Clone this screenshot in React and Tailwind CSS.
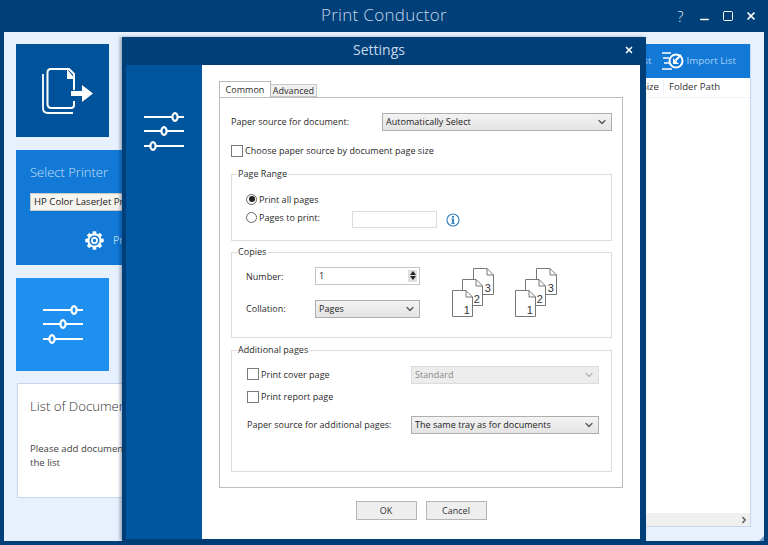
import { ChevronDown, X, Minus, Square, ChevronRight } from "lucide-react";

const sans = "font-['Open_Sans','Noto_Sans',sans-serif]";

function Sliders({ knob }) {
  const rows = [
    { y: 6, x: 31 },
    { y: 20, x: 20 },
    { y: 35, x: 9 },
  ];
  return (
    <svg width="40" height="41" viewBox="0 0 40 41" fill="none">
      {rows.map((r) => (
        <g key={r.y}>
          <line x1="0.5" x2="39.5" y1={r.y} y2={r.y} stroke="white" strokeWidth="2.2" strokeLinecap="round" />
          <ellipse cx={r.x} cy={r.y} rx="2.6" ry="3.8" fill={knob} stroke="white" strokeWidth="2.2" />
        </g>
      ))}
    </svg>
  );
}

function ExportIcon() {
  return (
    <svg width="51" height="46" viewBox="0 0 51 46" fill="none">
      <path d="M1 6 V40 Q1 45 6 45 H31" stroke="white" strokeWidth="1.8" />
      <path d="M32 22 V6 L27 1 H9 Q5.5 1 5.5 4.5 V36 Q5.5 40 9.5 40 H29 Q32 40 32 37 V33" stroke="white" strokeWidth="2" />
      <path d="M25 1 V11 H33 Z" fill="white" />
      <path d="M29 23 H40 V17 L51 25.5 L40 34 V28 H29 Z" fill="white" />
    </svg>
  );
}

function ImportIcon() {
  return (
    <svg width="22" height="19" viewBox="0 0 22 19" fill="none">
      <path d="M0 1 H9 M1 6 H7 M2 11 H7 M0 17 H10" stroke="white" strokeWidth="1.6" />
      <circle cx="14" cy="9" r="6.5" stroke="white" strokeWidth="2" />
      <path d="M19 3 L13.5 8.5" stroke="white" strokeWidth="2" />
      <path d="M11 6 L11 12 L17 12 Z" fill="white" />
    </svg>
  );
}

function GearIcon() {
  const teeth = [0, 45, 90, 135, 180, 225, 270, 315];
  return (
    <svg width="19" height="19" viewBox="0 0 19 19" fill="none">
      {teeth.map((a) => (
        <rect key={a} x="7.7" y="0.3" width="3.6" height="4" fill="white" transform={`rotate(${a} 9.5 9.5)`} />
      ))}
      <circle cx="9.5" cy="9.5" r="6.2" stroke="white" strokeWidth="2" />
      <circle cx="9.5" cy="9.5" r="2.6" stroke="white" strokeWidth="1.8" />
    </svg>
  );
}

function InfoIcon() {
  return (
    <svg width="14" height="14" viewBox="0 0 14 14" fill="none">
      <circle cx="7" cy="7" r="6" stroke="#3d86c6" strokeWidth="1.2" />
      <rect x="6" y="6" width="2" height="4.5" fill="#3d86c6" />
      <rect x="6" y="3" width="2" height="1.8" fill="#3d86c6" />
      <path d="M5 6 H8 M5 10.5 H9" stroke="#3d86c6" strokeWidth="0.8" />
    </svg>
  );
}

function Page({ n, className }) {
  return (
    <div className={`absolute w-[21px] h-[27px] ${className}`}>
      <svg width="21" height="27" viewBox="0 0 21 27" fill="none">
        <path d="M0.5 0.5 H14 L20.5 7 V26.5 H0.5 Z" fill="white" stroke="#777" />
        <path d="M14 0.5 V7 H20.5" stroke="#777" />
      </svg>
      <span className="absolute right-[3px] bottom-[0px] text-[11px] leading-[14px] text-[#333] font-['Liberation_Sans',sans-serif]">{n}</span>
    </div>
  );
}

function PageStack() {
  return (
    <div className="relative w-[44px] h-[50px]">
      <Page n="3" className="left-[21px] top-0" />
      <Page n="2" className="left-[10px] top-[11px]" />
      <Page n="1" className="left-0 top-[22px]" />
    </div>
  );
}

function Dropdown({ label, className, disabled }) {
  return (
    <div
      className={`flex items-center justify-between pl-[3px] pr-[3px] h-[18px] border text-[9px] ${
        disabled
          ? "border-[#dcdcdc] bg-[#ececec] text-[#8a8a8a]"
          : "border-[#aeaeae] bg-gradient-to-b from-[#f3f3f3] to-[#e4e4e4] text-[#222] font-medium"
      } ${className}`}
    >
      <span>{label}</span>
      <ChevronDown size={12} strokeWidth={2.6} className={disabled ? "text-[#b5b5b5]" : "text-[#555]"} />
    </div>
  );
}

function Checkbox({ label }) {
  return (
    <div className="flex items-center gap-[2px]">
      <div className="w-[12px] h-[12px] border border-[#7a7a7a] bg-white" />
      <span>{label}</span>
    </div>
  );
}

function Radio({ label, checked }) {
  return (
    <div className="flex items-center gap-[2px]">
      <div className="w-[11px] h-[11px] rounded-full border border-[#666] bg-white flex items-center justify-center">
        {checked && <div className="w-[6px] h-[6px] rounded-full bg-[#222]" />}
      </div>
      <span>{label}</span>
    </div>
  );
}

function Group({ title, className, children }) {
  return (
    <div className={`relative border border-[#dddddd] ${className}`}>
      <span className="absolute -top-[7px] left-[5px] bg-white px-[1px] leading-[12px]">{title}</span>
      {children}
    </div>
  );
}

function SettingsDialog() {
  return (
    <div className="absolute left-[122px] top-[37px] w-[524px] h-[504px] bg-[#003f78] flex flex-col shadow-[-2px_0_3px_rgba(0,30,70,0.35)]">
      <div className="relative h-[28px] shrink-0 flex items-center justify-center pr-[10px] pb-[3px] text-[14px] text-[#c6d8ea]">
        Settings
        <X size={10} strokeWidth={4} className="absolute right-[12px] top-[8px] text-white" />
      </div>
      <div className="flex flex-1 ml-[4px] mr-[6px] mb-[2px] min-h-0">
        <div className="w-[76px] bg-[#00559f] flex justify-center pt-[46px] pr-[1px]">
          <Sliders knob="#00559f" />
        </div>
        <div className="flex-1 bg-white pl-[17px] pr-[17px] pt-[17px] text-[9px] tracking-[0.03px] text-[#2a2a2a] flex flex-col">
          <div className="flex items-end h-[15px] relative z-10">
            <div className="h-[16px] w-[52px] border border-b-0 border-[#b8b8b8] bg-white flex items-center justify-center">Common</div>
            <div className="h-[13px] w-[46px] border border-l-0 border-[#c8c8c8] bg-[#f0f0f0] flex items-center justify-center">Advanced</div>
          </div>
          <div className="h-[391px] border border-[#bdbdbd] pl-[11px] pr-[10px] flex flex-col">
            <div className="flex items-center justify-between pt-[15px]">
              <span>Paper source for document:</span>
              <Dropdown label="Automatically Select" className="w-[230px]" />
            </div>
            <div className="mt-[13px]">
              <Checkbox label="Choose paper source by document page size" />
            </div>
            <Group title="Page Range" className="mt-[16px] h-[67px] pl-[14px] pt-[18px] flex flex-col gap-[4px]">
              <Radio label="Print all pages" checked />
              <div className="flex items-start">
                <div className="w-[106px] pt-[1px]">
                  <Radio label="Pages to print:" />
                </div>
                <div className="pt-[1px] flex items-center">
                  <div className="w-[85px] h-[17px] border border-[#dcdcdc]" />
                  <div className="ml-[9px]">
                    <InfoIcon />
                  </div>
                </div>
              </div>
            </Group>
            <Group title="Copies" className="mt-[11px] h-[86px] pl-[14px] pt-[14px] flex">
              <div className="w-[69px] flex flex-col gap-[19px] pt-[3px]">
                <span>Number:</span>
                <span>Collation:</span>
              </div>
              <div className="w-[105px] flex flex-col gap-[15px]">
                <div className="h-[18px] border border-[#c4c4c4] pl-[3px] pr-[2px] flex items-center justify-between text-[#222]">
                  <span>1</span>
                  <div className="w-[9px] h-[12px] bg-[#dedede] flex flex-col items-center justify-center gap-[1px]">
                    <div className="w-0 h-0 border-x-[3px] border-x-transparent border-b-[4px] border-b-[#222]" />
                    <div className="w-0 h-0 border-x-[3px] border-x-transparent border-t-[4px] border-t-[#222]" />
                  </div>
                </div>
                <Dropdown label="Pages" className="w-[105px]" />
              </div>
              <div className="ml-[32px] mt-[1px] flex gap-[19px]">
                <PageStack />
                <PageStack />
              </div>
            </Group>
            <Group title="Additional pages" className="mt-[12px] h-[122px] pl-[15px] pr-[12px] pt-[15px]">
              <div className="flex items-start justify-between">
                <div className="pt-[2px]">
                  <Checkbox label="Print cover page" />
                </div>
                <Dropdown label="Standard" disabled className="w-[188px]" />
              </div>
              <div className="mt-[8px] h-[11px] flex items-center">
                <Checkbox label="Print report page" />
              </div>
              <div className="flex items-center justify-between mt-[13px]">
                <span>Paper source for additional pages:</span>
                <Dropdown label="The same tray as for documents" className="w-[188px]" />
              </div>
            </Group>
          </div>
          <div className="flex justify-center gap-[9px] mt-[13px]">
            <button className="w-[61px] h-[19px] border border-[#b5b5b5] bg-[#eeeeee] text-[#333]">OK</button>
            <button className="w-[61px] h-[19px] border border-[#b5b5b5] bg-[#eeeeee] text-[#333]">Cancel</button>
          </div>
        </div>
      </div>
    </div>
  );
}

export default function App() {
  return (
    <div className={`relative w-[768px] h-[545px] overflow-hidden bg-[#003f78] flex flex-col ${sans}`}>
      {/* Title bar */}
      <header className="relative h-[32px] shrink-0 flex items-center justify-center pb-[2px] text-[17px] font-light tracking-[0.3px] text-[#c6d8ea]">
        Print Conductor
        <div className="absolute right-[11px] top-0 h-[32px] flex items-center gap-[11px] text-white">
          <span className="w-[13px] text-center text-[15px] text-[#e4eef7]">?</span>
          <Minus size={13} strokeWidth={2.5} className="mt-[6px]" />
          <Square size={12} strokeWidth={2} />
          <X size={12} strokeWidth={3.5} />
        </div>
      </header>

      {/* Main window */}
      <main className="relative flex-1 mx-[4px] mb-[4px] bg-[#e6f1fd] flex pl-[12px] pr-[13px] pt-[12px] min-h-0">
        <div className="w-[190px] flex flex-col gap-[13px]">
          <div className="w-[93px] h-[93px] bg-[#00529b] flex items-center justify-center pl-[10px]">
            <ExportIcon />
          </div>
          <div className="h-[115px] bg-[#1279d6] px-[14px] pt-[13px] flex flex-col">
            <span className="text-[13px] font-light leading-[18px] text-[#c5e0f9]">Select Printer</span>
            <div className="mt-[12px] h-[18px] bg-[#f6f4ee] border border-[#c9c9c9] flex items-center pl-[3px] text-[9.6px] text-[#222] whitespace-nowrap overflow-hidden">
              HP Color LaserJet Pro MFP M477
            </div>
            <div className="mt-[20px] ml-[55px] flex items-center gap-[9px] text-[10.5px] text-[#b5d6f5]">
              <GearIcon />
              <span>Properties</span>
            </div>
          </div>
          <div className="w-[93px] h-[93px] bg-[#2090f0] flex items-center justify-center">
            <Sliders knob="#2090f0" />
          </div>
          <div className="h-[115px] bg-white border border-[#c6d6ec] -mt-[1px] ml-[1px] pl-[12px] pr-[50px] pt-[12px]">
            <div className="text-[13.2px] font-light leading-[20px] text-[#333] whitespace-nowrap">List of Documents</div>
            <p className="mt-[26px] text-[9.6px] leading-[14px] text-[#444]">Please add documents to the list</p>
          </div>
        </div>

        <div className="flex-1 ml-[22px] mb-[14px] flex flex-col bg-white border-r border-b border-[#c6d6ec]">
          <div className="h-[34px] shrink-0 bg-[#1279d6] flex items-center justify-end pr-[14px] gap-[3px] text-[9.8px] text-[#a9d0f5]">
            <span className="mr-[7px]">Clear List</span>
            <ImportIcon />
            <span>Import List</span>
          </div>
          <div className="h-[20px] shrink-0 flex items-center justify-end text-[9.6px] text-[#333] border-b border-[#eef3f9]">
            <span className="pr-[4px] border-r border-[#eef3f9]">File Size</span>
            <span className="pl-[5px] w-[86px]">Folder Path</span>
          </div>
          <div className="flex-1" />
          <div className="h-[13px] shrink-0 bg-[#f0f0f0] flex items-center justify-end pr-[1px]">
            <ChevronRight size={10} strokeWidth={3.5} className="text-[#555]" />
          </div>
        </div>

        {/* resize grip */}
        <svg width="5" height="5" viewBox="0 0 5 5" className="absolute right-0 bottom-0">
          <path d="M5 0 V5 H0 Z" fill="#6f9ac4" />
        </svg>
      </main>

      <SettingsDialog />
    </div>
  );
}
